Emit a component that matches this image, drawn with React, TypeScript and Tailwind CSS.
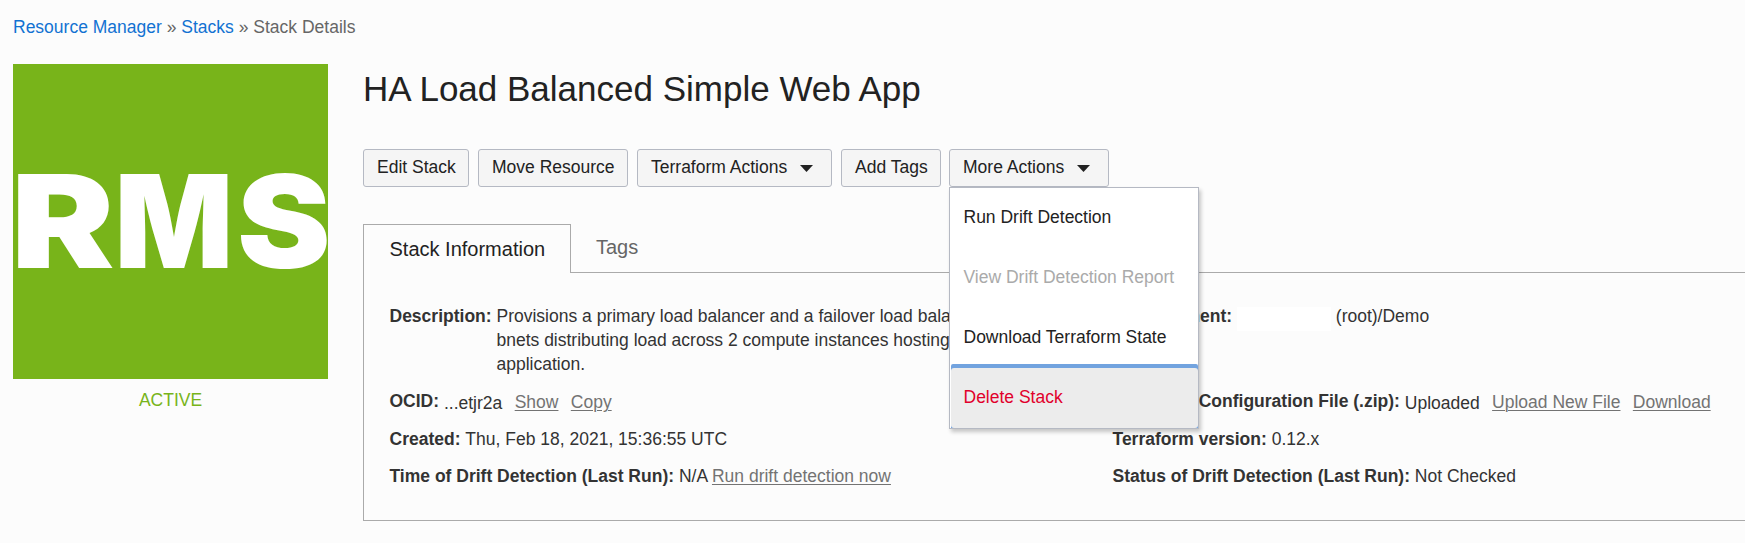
import React from "react";

const link = "text-[#737373] underline underline-offset-[2px] decoration-1";

function Caret() {
  return (
    <svg className="ml-[12.5px] mt-[2px]" width="13" height="7" viewBox="0 0 13 7">
      <path d="M0 0H13L6.5 7Z" fill="#222" />
    </svg>
  );
}

function Button({ children, caret, className }: { children: React.ReactNode; caret?: boolean; className: string }) {
  return (
    <button
      className={`flex h-[38px] shrink-0 items-center rounded-[3px] border border-[#b5b9c3] bg-[#f5f5f5] pl-[13px] pb-[2px] text-[#222] ${className}`}
    >
      <span>{children}</span>
      {caret && <Caret />}
    </button>
  );
}

function Row({ label, children, className = "" }: { label: string; children: React.ReactNode; className?: string }) {
  return (
    <div className={`flex h-6 gap-[4.86px] whitespace-nowrap leading-6 ${className}`}>
      <b>{label}</b>
      {children}
    </div>
  );
}

function Menu() {
  return (
    <div className="absolute left-0 top-[38px] z-10 h-[242px] w-[250px] border border-[#b5b9c3] bg-white text-[#222] shadow-[2px_3px_4px_rgba(0,0,0,0.22)]">
      <div className="flex h-[58px] items-center pl-[13.5px]">Run Drift Detection</div>
      <div className="flex h-[62px] items-center pl-[13.5px] text-[#aaa]">View Drift Detection Report</div>
      <div className="flex h-[56px] items-center pl-[13.5px] pt-[2px]">Download Terraform State</div>
      <div className="ml-px h-[64px] rounded-t-[2px] bg-[#72a3df] pt-[4px]">
        <div className="flex h-full items-center rounded-[3px] bg-[#ececec] pb-[2px] pl-[12.5px] text-[#e1002b]">
          Delete Stack
        </div>
      </div>
    </div>
  );
}

function Logo() {
  return (
    <svg width="315" height="315" viewBox="13 64 315 315" className="bg-[#78b41a]" fontFamily="Inter" fontWeight="900" fontSize="129" fill="#fff">
      <text transform="translate(11 268) scale(1.2 1)">R</text>
      <text transform="translate(114.7 268) scale(0.96 1)">M</text>
      <text transform="translate(237 268) scale(1.09 1)">S</text>
    </svg>
  );
}

export default function App() {
  return (
    <div className="h-[543px] w-full overflow-hidden bg-[#fcfcfc] pl-[13px] pt-[15px] font-['Liberation_Sans',Arial,sans-serif] text-[17.5px] leading-6 text-[#333]">
      <nav className="h-[49px] whitespace-nowrap text-[#666]">
        <a className="text-[#1272d2]">Resource Manager</a> » <a className="text-[#1272d2]">Stacks</a> » Stack Details
      </nav>
      <div className="flex">
        <aside className="w-[315px] shrink-0">
          <Logo />
          <div className="mt-[9px] text-center text-[#78b41a]">ACTIVE</div>
        </aside>
        <main className="ml-[35px] min-w-0 flex-1">
          <h1 className="h-[85px] pt-[4px] text-[35px] leading-[42px] text-[#222]">HA Load Balanced Simple Web App</h1>
          <div className="flex">
            <Button className="w-[106px]">Edit Stack</Button>
            <Button className="ml-[9px] w-[150px]">Move Resource</Button>
            <Button className="ml-[9px] w-[195px]" caret>Terraform Actions</Button>
            <Button className="ml-[9px] w-[100px]">Add Tags</Button>
            <div className="relative ml-[8px]">
              <Button className="w-[160px]" caret>More Actions</Button>
              <Menu />
            </div>
          </div>
          <div className="mt-[37px] flex h-[49px] text-[20px]">
            <div className="w-[208px] border-l border-r border-t border-[#aaa] pl-[25.5px] pt-[12px] text-[#222]">Stack Information</div>
            <div className="flex-1 border-b border-[#aaa] pl-[25px] pt-[11px] text-[#666]">Tags</div>
          </div>
          <section className="flex h-[248px] border-b border-l border-[#aaa] pl-[25.5px] pt-[31px]">
            <div className="w-[723px] shrink-0">
              <Row label="Description:" className="mb-[61px]">
                <div>
                  Provisions a primary load balancer and a failover load balancer across public su
                  <br />
                  bnets distributing load across 2 compute instances hosting a simple web
                  <br />
                  application.
                </div>
              </Row>
              <Row label="OCID:" className="mb-[14px]">
                <span className="pt-[2px]">...etjr2a</span>
                <a className={`ml-[7.5px] pt-px ${link}`}>Show</a>
                <a className={`ml-[7.5px] pt-px ${link}`}>Copy</a>
              </Row>
              <Row label="Created:" className="mb-[13px]">Thu, Feb 18, 2021, 15:36:55 UTC</Row>
              <Row label="Time of Drift Detection (Last Run):">
                N/A<a className={`-ml-px ${link}`}>Run drift detection now</a>
              </Row>
            </div>
            <div className="shrink-0">
              <Row label="Compartment:" className="mb-[61px]">
                <span className="mt-[3px] h-6 w-[94px] bg-white" />
                <span>(root)/Demo</span>
              </Row>
              <Row label="Terraform Configuration File (.zip):" className="mb-[14px]">
                <span className="pt-[2px]">Uploaded</span>
                <a className={`ml-[7.5px] pt-px ${link}`}>Upload New File</a>
                <a className={`ml-[7.5px] pt-px ${link}`}>Download</a>
              </Row>
              <Row label="Terraform version:" className="mb-[13px]">0.12.x</Row>
              <Row label="Status of Drift Detection (Last Run):">Not Checked</Row>
            </div>
          </section>
        </main>
      </div>
    </div>
  );
}
